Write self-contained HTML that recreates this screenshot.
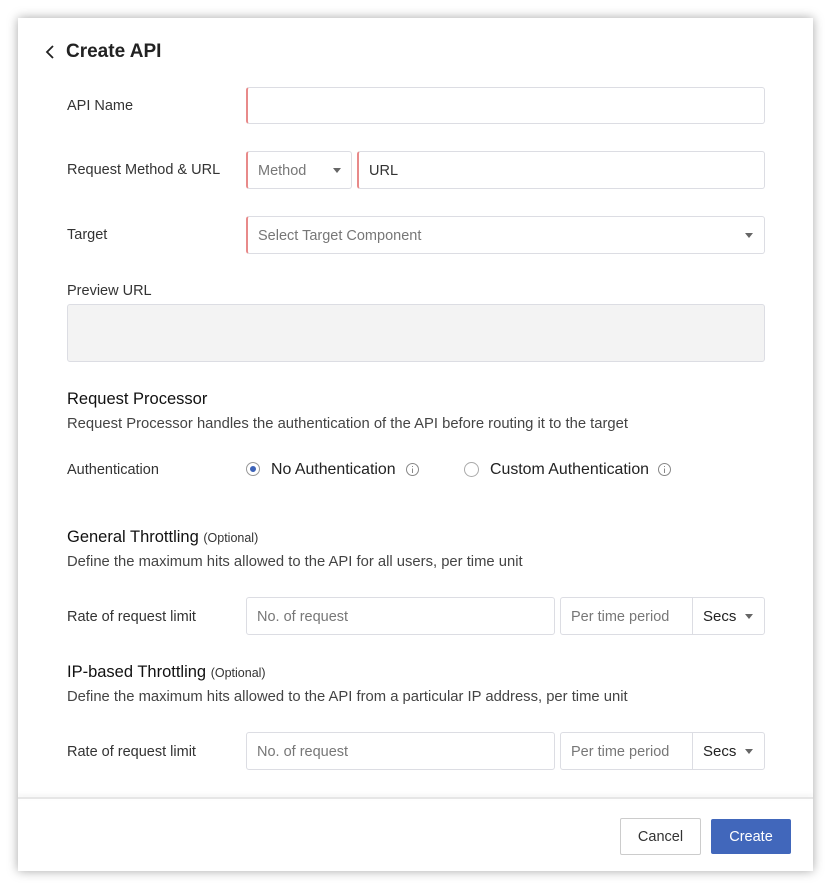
<!DOCTYPE html><html><head><style>
body{margin:0;width:831px;height:889px;background:#fff;font-family:"Liberation Sans",sans-serif;position:relative;overflow:hidden}
.card{position:absolute;left:18px;top:18px;width:795px;height:853px;background:#fff;box-shadow:0 0 10px rgba(0,0,0,.35)}
.a{position:absolute;white-space:nowrap}
.lbl{font-size:14.5px;color:#333;margin-top:1px}
.in{position:absolute;box-sizing:border-box;border:1px solid #dcdde3;border-radius:3px;background:#fff;font-size:14.5px;color:#777;padding-left:10px;padding-top:2px;display:flex;align-items:center}
.req{border-left:2px solid #e88a8a}
.car{position:absolute;width:0;height:0;border-left:4px solid transparent;border-right:4px solid transparent;border-top:5px solid #666}
.h{font-size:16.5px;color:#111}
.d{font-size:14.8px;color:#444;margin-top:1px}
.opt{font-size:12.5px;color:#333}
</style></head><body>
<div class="card"></div>
<svg class="a" style="left:44px;top:44px" width="12" height="16"><path d="M9 2L3 8l6 6" stroke="#222" stroke-width="1.8" fill="none"/></svg>
<div class="a" style="left:66px;top:41px;font-size:19px;font-weight:bold;color:#222">Create API</div>
<div class="a lbl" style="left:67px;top:97px">API Name</div>
<div class="in req" style="left:246px;top:87px;width:519px;height:37px"></div>
<div class="a lbl" style="left:67px;top:161px">Request Method &amp; URL</div>
<div class="in req" style="left:246px;top:151px;width:106px;height:38px">Method</div>
<div class="car" style="left:333px;top:168px"></div>
<div class="in req" style="left:357px;top:151px;width:408px;height:38px;color:#333">URL</div>
<div class="a lbl" style="left:67px;top:226px">Target</div>
<div class="in req" style="left:246px;top:216px;width:519px;height:38px">Select Target Component</div>
<div class="car" style="left:745px;top:233px"></div>
<div class="a lbl" style="left:67px;top:282px">Preview URL</div>
<div class="in" style="left:67px;top:304px;width:698px;height:58px;background:#f3f3f3"></div>
<div class="a h" style="left:67px;top:390px">Request Processor</div>
<div class="a d" style="left:67px;top:415px">Request Processor handles the authentication of the API before routing it to the target</div>
<div class="a lbl" style="left:67px;top:461px">Authentication</div>
<div class="a" style="left:246px;top:462px;width:14px;height:14px;border:1px solid #999;border-radius:50%;box-sizing:border-box"><div style="position:absolute;left:3px;top:3px;width:6px;height:6px;border-radius:50%;background:#3d63b8"></div></div>
<div class="a" style="left:271px;top:461px;font-size:15.9px;color:#222">No Authentication</div>
<svg class="a" style="left:405px;top:462px" width="15" height="15"><circle cx="7.5" cy="7.5" r="6" stroke="#888" fill="none"/><path d="M7.5 6.5v4.5M7.5 4v1" stroke="#888"/></svg>
<div class="a" style="left:464px;top:462px;width:15px;height:15px;border:1px solid #aaa;border-radius:50%;box-sizing:border-box"></div>
<div class="a" style="left:490px;top:461px;font-size:15.9px;color:#222">Custom Authentication</div>
<svg class="a" style="left:657px;top:462px" width="15" height="15"><circle cx="7.5" cy="7.5" r="6" stroke="#888" fill="none"/><path d="M7.5 6.5v4.5M7.5 4v1" stroke="#888"/></svg>
<div class="a h" style="left:67px;top:528px">General Throttling <span class="opt">(Optional)</span></div>
<div class="a d" style="left:67px;top:553px">Define the maximum hits allowed to the API for all users, per time unit</div>
<div class="a lbl" style="left:67px;top:608px">Rate of request limit</div>
<div class="in" style="left:246px;top:597px;width:309px;height:38px">No. of request</div>
<div class="in" style="left:560px;top:597px;width:205px;height:38px">Per time period</div>
<div class="a" style="left:692px;top:598px;width:1px;height:36px;background:#dcdde3"></div>
<div class="a" style="left:703px;top:608px;font-size:15px;color:#222">Secs</div>
<div class="car" style="left:745px;top:614px"></div>
<div class="a h" style="left:67px;top:663px">IP-based Throttling <span class="opt">(Optional)</span></div>
<div class="a d" style="left:67px;top:688px">Define the maximum hits allowed to the API from a particular IP address, per time unit</div>
<div class="a lbl" style="left:67px;top:743px">Rate of request limit</div>
<div class="in" style="left:246px;top:732px;width:309px;height:38px">No. of request</div>
<div class="in" style="left:560px;top:732px;width:205px;height:38px">Per time period</div>
<div class="a" style="left:692px;top:733px;width:1px;height:36px;background:#dcdde3"></div>
<div class="a" style="left:703px;top:743px;font-size:15px;color:#222">Secs</div>
<div class="car" style="left:745px;top:749px"></div>
<div class="a" style="left:18px;top:797px;width:795px;height:2px;background:#e6e6e6;box-shadow:0 -2px 4px rgba(0,0,0,.08)"></div>
<div class="a" style="left:620px;top:818px;width:81px;height:37px;border:1px solid #ccc;box-sizing:border-box;border-radius:2px;font-size:14.5px;color:#333;display:flex;align-items:center;justify-content:center;padding-top:1px">Cancel</div>
<div class="a" style="left:711px;top:819px;width:80px;height:35px;background:#4167bb;border-radius:2px;font-size:14.5px;color:#fff;display:flex;align-items:center;justify-content:center;padding-top:1px;box-sizing:border-box">Create</div>
</body></html>
